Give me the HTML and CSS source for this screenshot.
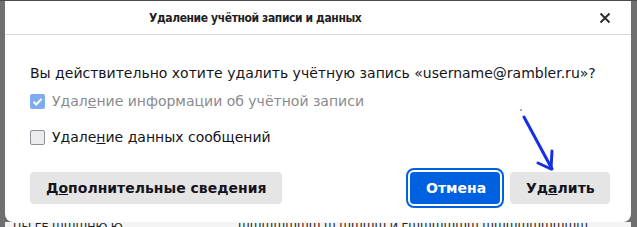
FILE: index.html
```html
<!DOCTYPE html>
<html lang="ru">
<head>
<meta charset="utf-8">
<link rel="stylesheet" href="styles.css">
</head>
<body>
<div class="screen">
  <div class="dialog">
    <div class="titlebar">
      <span class="title">Удаление учётной записи и данных</span>
      <span class="close">
        <svg width="12" height="12" viewBox="0 0 12 12"><path d="M1.5 1.5 L10.5 10.5 M10.5 1.5 L1.5 10.5" stroke="#2e2e2e" stroke-width="2" fill="none"/></svg>
      </span>
    </div>
    <div class="body">
      <p class="question">Вы действительно хотите удалить учётную запись «username@rambler.ru»?</p>
      <label class="check disabled">
        <span class="box checked"><svg width="15" height="15" viewBox="0 0 15 15"><path d="M3.5 7.8 L6.3 10.5 L11.5 4.8" stroke="#fff" stroke-width="2" fill="none"/></svg></span>
        <span>Удал<u>е</u>ние информации об учётной записи</span>
      </label>
      <label class="check">
        <span class="box"></span>
        <span>Удале<u>н</u>ие данных сообщений</span>
      </label>
      <div class="actions">
        <button class="btn">Д<u>о</u>полнительные сведения</button>
        <div class="spacer"></div>
        <button class="btn primary">Отмена</button>
        <button class="btn">Уд<u>а</u>лить</button>
      </div>
    </div>
  </div>
  <div class="under">ЦЫ ГЕ ШШШНЮ Ю &nbsp; &nbsp; &nbsp; &nbsp; &nbsp; &nbsp; &nbsp; &nbsp; &nbsp; &nbsp; &nbsp; &nbsp; &nbsp; &nbsp; &nbsp; &nbsp; ШШШШШШШ Ш ШШШШ И ГШШШШШШ ШШШШШШШШШ</div>
  <svg class="arrow" width="60" height="75" viewBox="0 0 60 75">
    <circle cx="2" cy="2" r="0.8" fill="#1a33e8"/>
    <path d="M5 9 L33 61" stroke="#1430e6" stroke-width="3" fill="none" stroke-linecap="round"/>
    <path d="M33 43 L32 61 L19 55" stroke="#1430e6" stroke-width="3" fill="none" stroke-linecap="round" stroke-linejoin="round"/>
  </svg>
</div>
</body>
</html>
```

FILE: styles.css
```css
html, body {
  margin: 0;
  padding: 0;
}
body {
  width: 637px;
  height: 227px;
  overflow: hidden;
  background: #6f6f6f;
  font-family: "DejaVu Sans", sans-serif;
}
.screen {
  position: relative;
  height: 227px;
  padding: 0 6px 0 5px;
  box-sizing: border-box;
  border-top: 1px solid #4a4a4a;
}
.dialog {
  position: relative;
  z-index: 1;
  background: #ffffff;
  height: 221px;
  border-radius: 0 0 8px 8px;
  display: flex;
  flex-direction: column;
}
.titlebar {
  height: 33px;
  border-bottom: 1px solid #d9d9d9;
  display: flex;
  align-items: center;
  padding-left: 144px;
  padding-right: 20px;
}
.title {
  font-family: "DejaVu Sans Condensed", "DejaVu Sans", sans-serif;
  font-stretch: condensed;
  font-weight: bold;
  font-size: 12px;
  letter-spacing: -0.4px;
  color: #1f1f1f;
  flex: 1;
}
.close {
  display: flex;
  width: 12px;
  height: 12px;
}
.body {
  padding: 0 21px 0 25px;
  display: flex;
  flex-direction: column;
  flex: 1;
}
.question {
  margin: 29px 0 0 0;
  font-size: 14px;
  line-height: 18px;
  color: #15141a;
  white-space: nowrap;
}
.check {
  display: flex;
  align-items: center;
  gap: 7px;
  font-size: 14px;
  line-height: 18px;
  color: #15141a;
  white-space: nowrap;
}
.check.disabled {
  margin-top: 10px;
  color: #8a8a8e;
}
.check + .check {
  margin-top: 18px;
}
.box {
  width: 13px;
  height: 13px;
  border: 1px solid #8f8f9d;
  background: #ececec;
  border-radius: 2px;
  display: flex;
  flex-shrink: 0;
}
.box.checked {
  width: 15px;
  height: 15px;
  border: none;
  background: #7fabf0;
}
.actions {
  margin-top: 26px;
  display: flex;
  align-items: center;
  gap: 10px;
}
.spacer {
  flex: 1;
}
.btn {
  height: 32px;
  border: none;
  border-radius: 4px;
  background: #e5e5e5;
  color: #15141a;
  font-family: "DejaVu Sans", sans-serif;
  font-weight: bold;
  font-size: 14px;
  padding: 0 16px;
  margin: 0;
}
.btn.primary {
  background: #0061e0;
  color: #ffffff;
  width: 90px;
  outline: 2px solid #0061e0;
  outline-offset: 2px;
}
.btn:last-child {
  width: 100px;
}
.under {
  height: 5px;
  overflow: hidden;
  background: #f4f4f4;
  color: #222;
  font-size: 11px;
  line-height: 12px;
  white-space: nowrap;
  padding-left: 8px;
}
.arrow {
  position: absolute;
  left: 519px;
  top: 107px;
  z-index: 2;
}
```
